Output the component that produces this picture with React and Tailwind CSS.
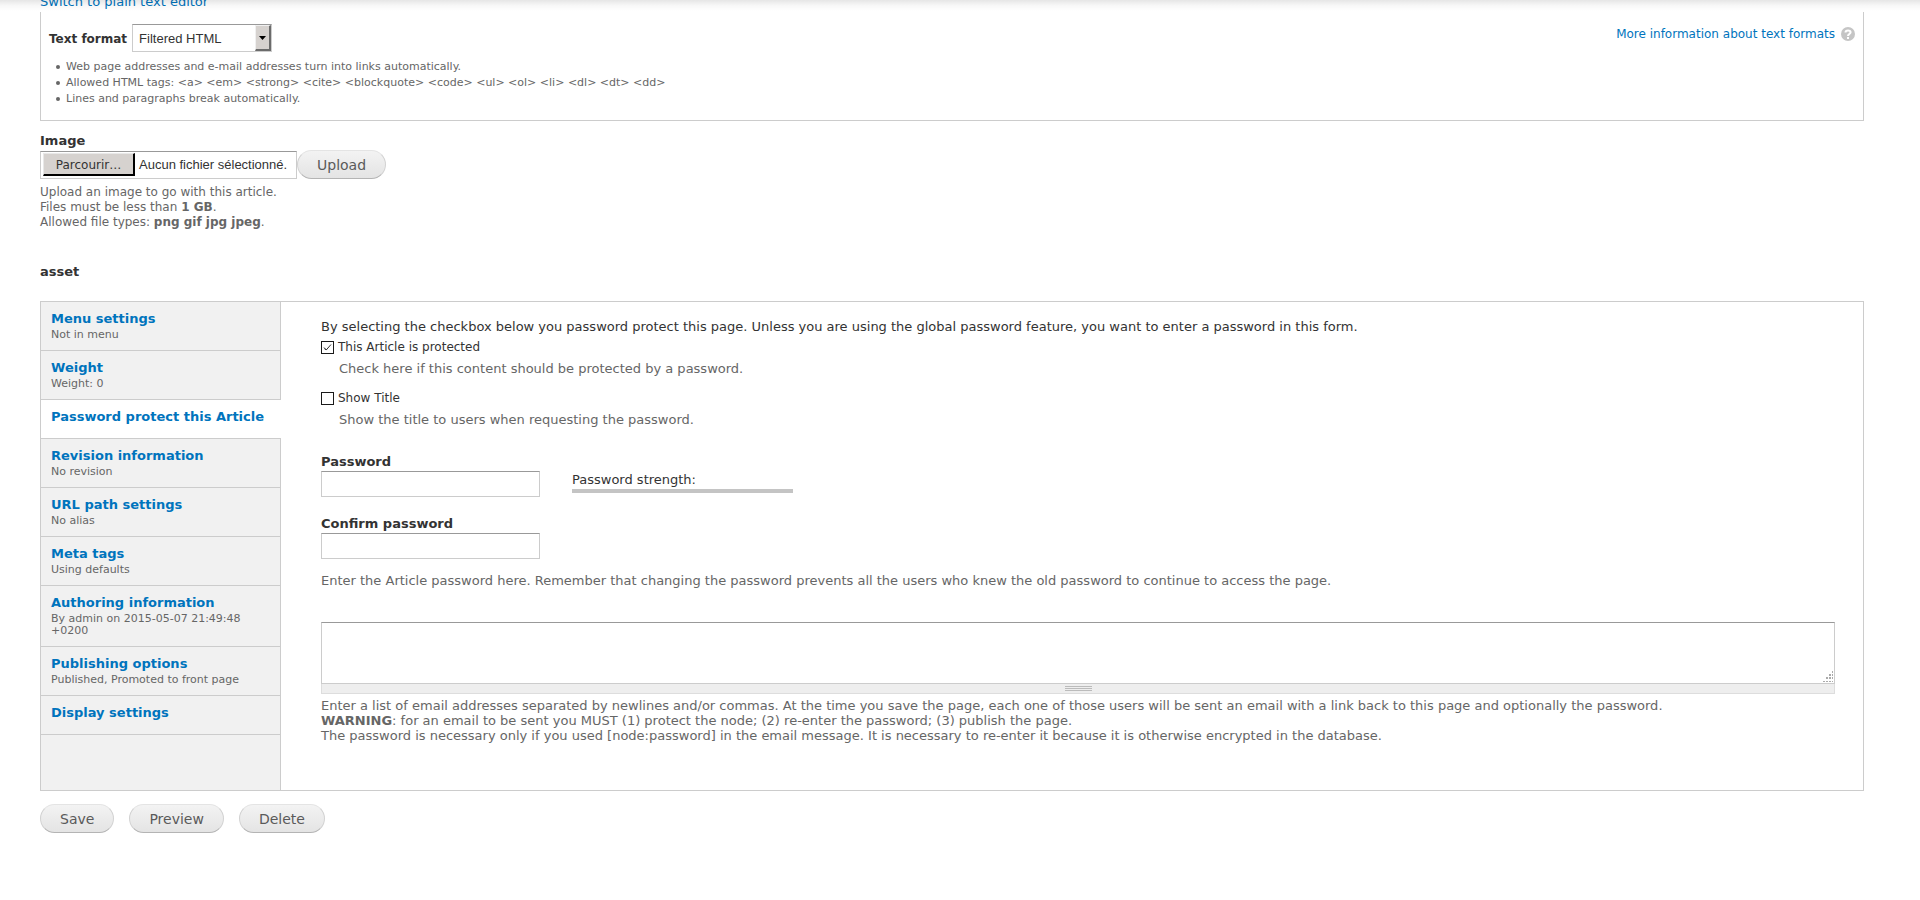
import { useState } from "react";

const tabs = [
  { title: "Menu settings", summary: "Not in menu" },
  { title: "Weight", summary: "Weight: 0" },
  { title: "Password protect this Article", summary: "" },
  { title: "Revision information", summary: "No revision" },
  { title: "URL path settings", summary: "No alias" },
  { title: "Meta tags", summary: "Using defaults" },
  { title: "Authoring information", summary: "By admin on 2015-05-07 21:49:48 +0200" },
  { title: "Publishing options", summary: "Published, Promoted to front page" },
  { title: "Display settings", summary: "" },
];

const tips = [
  "Web page addresses and e-mail addresses turn into links automatically.",
  "Allowed HTML tags: <a> <em> <strong> <cite> <blockquote> <code> <ul> <ol> <li> <dl> <dt> <dd>",
  "Lines and paragraphs break automatically.",
];

const PillButton = ({ children }) => (
  <button
    type="button"
    className="h-[29px] rounded-full border border-[#e4e4e4] border-x-[#d2d2d2] border-b-[#b4b4b4] bg-linear-to-b from-[#f3f3f3] to-[#e4e4e4] px-[19px] text-[14px] leading-[20px] text-[#5a5a5a]"
  >
    {children}
  </button>
);

const CheckItem = ({ id, label, description, defaultChecked }) => (
  <div>
    <div className="flex items-center gap-1">
      <span className="relative flex h-[13px] w-[13px]">
        <input
          id={id}
          type="checkbox"
          defaultChecked={defaultChecked}
          className="peer h-[13px] w-[13px] appearance-none border border-[#1a1a1a] bg-white"
        />
        <svg
          viewBox="0 0 13 13"
          className="pointer-events-none absolute inset-0 hidden h-[13px] w-[13px] peer-checked:block"
          fill="none"
          stroke="#333"
        >
          <path d="M3 6.5 L5.2 9 L10 3.5 M3.5 7.8 L5.2 8.6" />
        </svg>
      </span>
      <label htmlFor={id} className="text-[12px] leading-[16px]">
        {label}
      </label>
    </div>
    <p className="mt-[6px] ml-[18px] leading-[16px] text-[#666]">{description}</p>
  </div>
);

const PasswordField = ({ id, label }) => (
  <div className="w-[219px]">
    <label htmlFor={id} className="block leading-[18px] font-bold">
      {label}
    </label>
    <input
      id={id}
      type="password"
      className="block h-[26px] w-full border border-[#ccc] border-t-[#999] bg-white px-1 outline-none"
    />
  </div>
);

export default function App() {
  const [active, setActive] = useState(2);

  return (
    <div className="relative bg-white pr-14 pl-10 font-['DejaVu_Sans',sans-serif] text-[12px] text-[#333]">
      {/* shadow of the toolbar */}
      <div className="pointer-events-none absolute inset-x-0 top-0 h-[11px] bg-linear-to-b from-black/10 via-black/3 to-transparent" />

      <div className="flex h-3 items-end overflow-hidden">
        <a href="#plain" className="text-[13px] leading-[20px] text-[#0074bd]">
          Switch to plain text editor
        </a>
      </div>

      <section className="h-[109px] border border-t-0 border-[#ccc] px-2 pt-3">
        <div className="flex items-start justify-between">
          <div className="flex items-center gap-[5px]">
            <label htmlFor="format" className="pt-[2px] font-bold">
              Text format
            </label>
            <div className="relative">
              <select
                id="format"
                className="block h-[28px] w-[140px] appearance-none border border-[#ccc] border-t-[#999] bg-white pt-[2px] pl-[6px] font-['Liberation_Sans',sans-serif] text-[13px] outline-none"
              >
                <option>Filtered HTML</option>
                <option>Full HTML</option>
                <option>Plain text</option>
              </select>
              <span className="pointer-events-none absolute top-px right-px flex h-[26px] w-4 items-center justify-center border border-[#f0f0f0] border-r-2 border-b-2 border-r-[#6b6b6b] border-b-[#6b6b6b] bg-[#d6d2cf]">
                <svg width="7" height="4" viewBox="0 0 7 4">
                  <path d="M0 0h7L3.500 4z" fill="#000" />
                </svg>
              </span>
            </div>
          </div>
          <a href="#formats" className="flex items-center gap-[6px] pt-px text-[#0074bd]">
            More information about text formats
            <svg width="14" height="14" viewBox="0 0 14 14">
              <circle cx="7" cy="7" r="7" fill="#c5c5c5" />
              <path
                d="M4.500 5.400C4.500 2.800 9.600 2.800 9.600 5.300C9.600 7 7 7 7 9"
                fill="none"
                stroke="#fff"
                strokeWidth="2"
              />
              <rect x="6" y="10" width="2" height="2" fill="#fff" />
            </svg>
          </a>
        </div>
        <ul className="mt-[7px] ml-[7px] text-[11px] leading-[16px] text-[#666]">
          {tips.map((tip) => (
            <li key={tip} className="flex items-center gap-[6px]">
              <span className="h-1 w-1 rounded-full bg-[#666]" />
              {tip}
            </li>
          ))}
        </ul>
      </section>

      <section className="mt-[11px]">
        <label htmlFor="image" className="block text-[13px] leading-[18px] font-bold">
          Image
        </label>
        <div className="flex items-center">
          <label
            htmlFor="image"
            className="flex h-[28px] w-[257px] items-center gap-1 border border-[#ccc] border-t-[#999] bg-white px-[2px] font-['Liberation_Sans',sans-serif] text-[13px]"
          >
            <input id="image" type="file" className="sr-only" />
            <span className="flex h-[23px] w-[92px] items-center justify-center border border-[#e8e8e8] border-r-2 border-b-2 border-r-black border-b-black bg-[#d6d2cf] pt-px font-['DejaVu_Sans',sans-serif] text-[12px]">
              Parcourir…
            </span>
            Aucun fichier sélectionné.
          </label>
          <PillButton>Upload</PillButton>
        </div>
        <p className="mt-[6px] leading-[15px] text-[#666]">
          Upload an image to go with this article.
          <br />
          Files must be less than <strong>1 GB</strong>.
          <br />
          Allowed file types: <strong>png gif jpg jpeg</strong>.
        </p>
      </section>

      <h2 className="mt-[33px] text-[13px] leading-[18px] font-bold">asset</h2>

      <div className="mt-5 flex border border-[#ccc]">
        <ul className="flex w-[240px] flex-none flex-col">
          {tabs.map((tab, index) => (
            <li
              key={tab.title}
              className={
                index === active
                  ? "border-b border-[#ccc] bg-white"
                  : "border-r border-b border-[#ccc] bg-[#f1f1f1]"
              }
            >
              <button
                type="button"
                onClick={() => setActive(index)}
                className="block w-full px-[10px] pt-2 pb-[9px] text-left"
              >
                <span className="block text-[13px] leading-[18px] font-bold text-[#0074bd]">
                  {tab.title}
                </span>
                <span className="block min-h-[3px] pt-px text-[11px] leading-[12px] text-[#666]">
                  {tab.summary}
                </span>
              </button>
            </li>
          ))}
          <li className="flex-1 border-r border-[#ccc] bg-[#f1f1f1]" />
        </ul>

        <div className="min-w-0 flex-1 pt-[17px] pr-7 pb-[47px] pl-10 text-[13px]">
          <p className="leading-[16px]">
            By selecting the checkbox below you password protect this page. Unless you are using the
            global password feature, you want to enter a password in this form.
          </p>
          <div className="mt-1 flex flex-col gap-[13px]">
            <CheckItem
              id="protected"
              label="This Article is protected"
              description="Check here if this content should be protected by a password."
              defaultChecked
            />
            <CheckItem
              id="show-title"
              label="Show Title"
              description="Show the title to users when requesting the password."
            />
          </div>

          <div className="mt-[25px] flex gap-8">
            <PasswordField id="pass1" label="Password" />
            <div className="w-[221px] pt-[19px]">
              <div className="leading-[16px]">Password strength:</div>
              <div className="mt-px h-1 bg-[#c4c4c4]" />
            </div>
          </div>
          <div className="mt-[18px]">
            <PasswordField id="pass2" label="Confirm password" />
          </div>
          <p className="mt-[14px] leading-[16px] text-[#666]">
            Enter the Article password here. Remember that changing the password prevents all the
            users who knew the old password to continue to access the page.
          </p>

          <div className="relative mt-[33px]">
            <textarea
              aria-label="Email addresses"
              className="block h-[62px] w-full resize-none border border-[#ccc] border-t-[#999] bg-white p-1 outline-none"
            />
            <svg
              width="12"
              height="12"
              viewBox="0 0 12 12"
              className="pointer-events-none absolute right-px bottom-[11px]"
              fill="#aaa"
            >
              <path d="M10 0h1v2h-1zM7 3h2v2h-2zM10 3h1v2h-1zM4 6h2v2h-2zM7 6h2v2h-2zM10 6h1v2h-1zM1 10h2v1h-2zM4 10h2v1h-2zM7 10h2v1h-2zM10 10h1v1h-1z" />
            </svg>
            <div className="flex h-[10px] flex-col items-center gap-px border border-t-0 border-[#ddd] bg-[#eee] pt-[2px]">
              <span className="h-px w-[27px] bg-[#bbb]" />
              <span className="h-px w-[27px] bg-[#bbb]" />
              <span className="h-px w-[27px] bg-[#bbb]" />
            </div>
          </div>
          <p className="mt-1 leading-[15px] text-[#666]">
            Enter a list of email addresses separated by newlines and/or commas. At the time you save
            the page, each one of those users will be sent an email with a link back to this page and
            optionally the password.
            <br />
            <strong>WARNING</strong>: for an email to be sent you MUST (1) protect the node; (2)
            re-enter the password; (3) publish the page.
            <br />
            The password is necessary only if you used [node:password] in the email message. It is
            necessary to re-enter it because it is otherwise encrypted in the database.
          </p>
        </div>
      </div>

      <div className="mt-[13px] flex gap-[15px]">
        <PillButton>Save</PillButton>
        <PillButton>Preview</PillButton>
        <PillButton>Delete</PillButton>
      </div>
    </div>
  );
}
